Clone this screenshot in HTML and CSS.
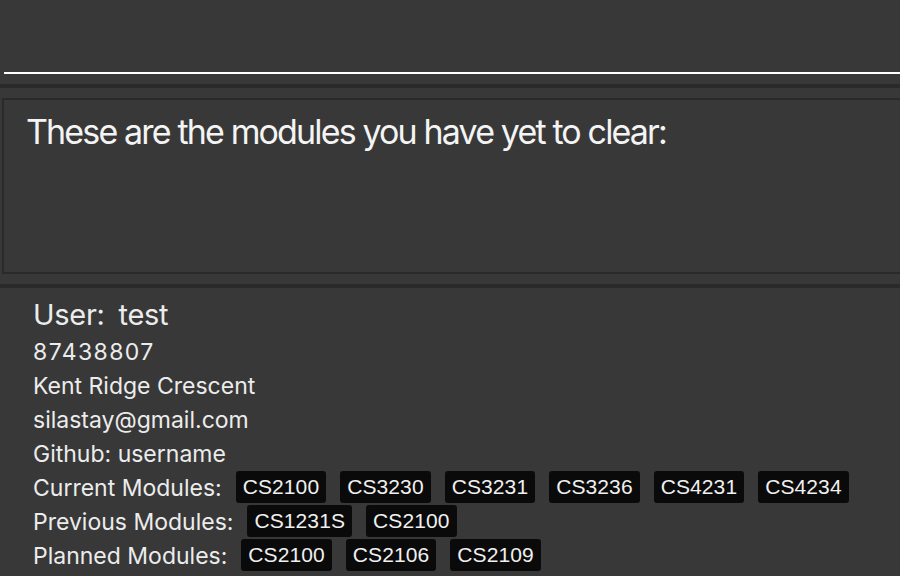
FILE: index.html
```html
<!DOCTYPE html>
<html>
<head>
<meta charset="utf-8">
<link rel="stylesheet" href="styles.css">
</head>
<body>
<div class="command">
  <div class="command-input"></div>
</div>
<div class="divider"></div>
<div class="result-wrap">
  <div class="result-box">
    <p class="result-text">These are the modules you have yet to clear:</p>
  </div>
</div>
<div class="divider"></div>
<div class="card">
  <div class="name-row"><span>User:</span><span>test</span></div>
  <div class="line phone">87438807</div>
  <div class="line">Kent Ridge Crescent</div>
  <div class="line">silastay@gmail.com</div>
  <div class="line">Github: username</div>
  <div class="line tag-row"><span class="label">Current Modules:</span>
    <span class="tag">CS2100</span><span class="tag">CS3230</span><span class="tag">CS3231</span><span class="tag">CS3236</span><span class="tag">CS4231</span><span class="tag">CS4234</span>
  </div>
  <div class="line tag-row"><span class="label">Previous Modules:</span>
    <span class="tag">CS1231S</span><span class="tag">CS2100</span>
  </div>
  <div class="line tag-row"><span class="label">Planned Modules:</span>
    <span class="tag">CS2100</span><span class="tag">CS2106</span><span class="tag">CS2109</span>
  </div>
</div>
</body>
</html>
```
FILE: styles.css
```css
html, body {
  margin: 0;
  padding: 0;
  background: #383838;
  overflow: hidden;
}
body {
  width: 900px;
  height: 576px;
  font-family: Inter, "Noto Sans", sans-serif;
  color: #ececec;
}
.command {
  height: 84px;
  padding-left: 4px;
  box-sizing: border-box;
}
.command-input {
  height: 72px;
  border-bottom: 2px solid #ffffff;
}
.divider {
  height: 4px;
  background: #2a2a2a;
}
.result-wrap {
  padding: 10px 0 10px 2px;
}
.result-box {
  height: 172px;
  border: 2px solid #2a2a2a;
  border-right: none;
}
.result-text {
  margin: 0;
  padding: 12px 0 0 22px;
  font-size: 34px;
  letter-spacing: -1.85px;
  color: #f4f4f4;
  line-height: 40px;
}
.card {
  padding: 9px 0 0 33px;
}
.name-row {
  display: flex;
  gap: 14px;
  font-size: 29px;
  letter-spacing: -0.3px;
  line-height: 36px;
  height: 38px;
}
.line {
  font-size: 23px;
  line-height: 34px;
  height: 34px;
  letter-spacing: 0;
}
.phone {
  letter-spacing: 1.4px;
}
.tag-row {
  display: flex;
  align-items: center;
  gap: 14px;
}
.tag-row .label {
  margin-right: 0;
}
.tag {
  align-self: flex-start;
  background: #0a0a0a;
  border-radius: 3px;
  height: 32px;
  line-height: 32px;
  padding: 0 7px;
  font-family: "Liberation Sans", Arial, sans-serif;
  font-size: 21px;
  letter-spacing: 0.1px;
  color: #f0f0f0;
}
```
